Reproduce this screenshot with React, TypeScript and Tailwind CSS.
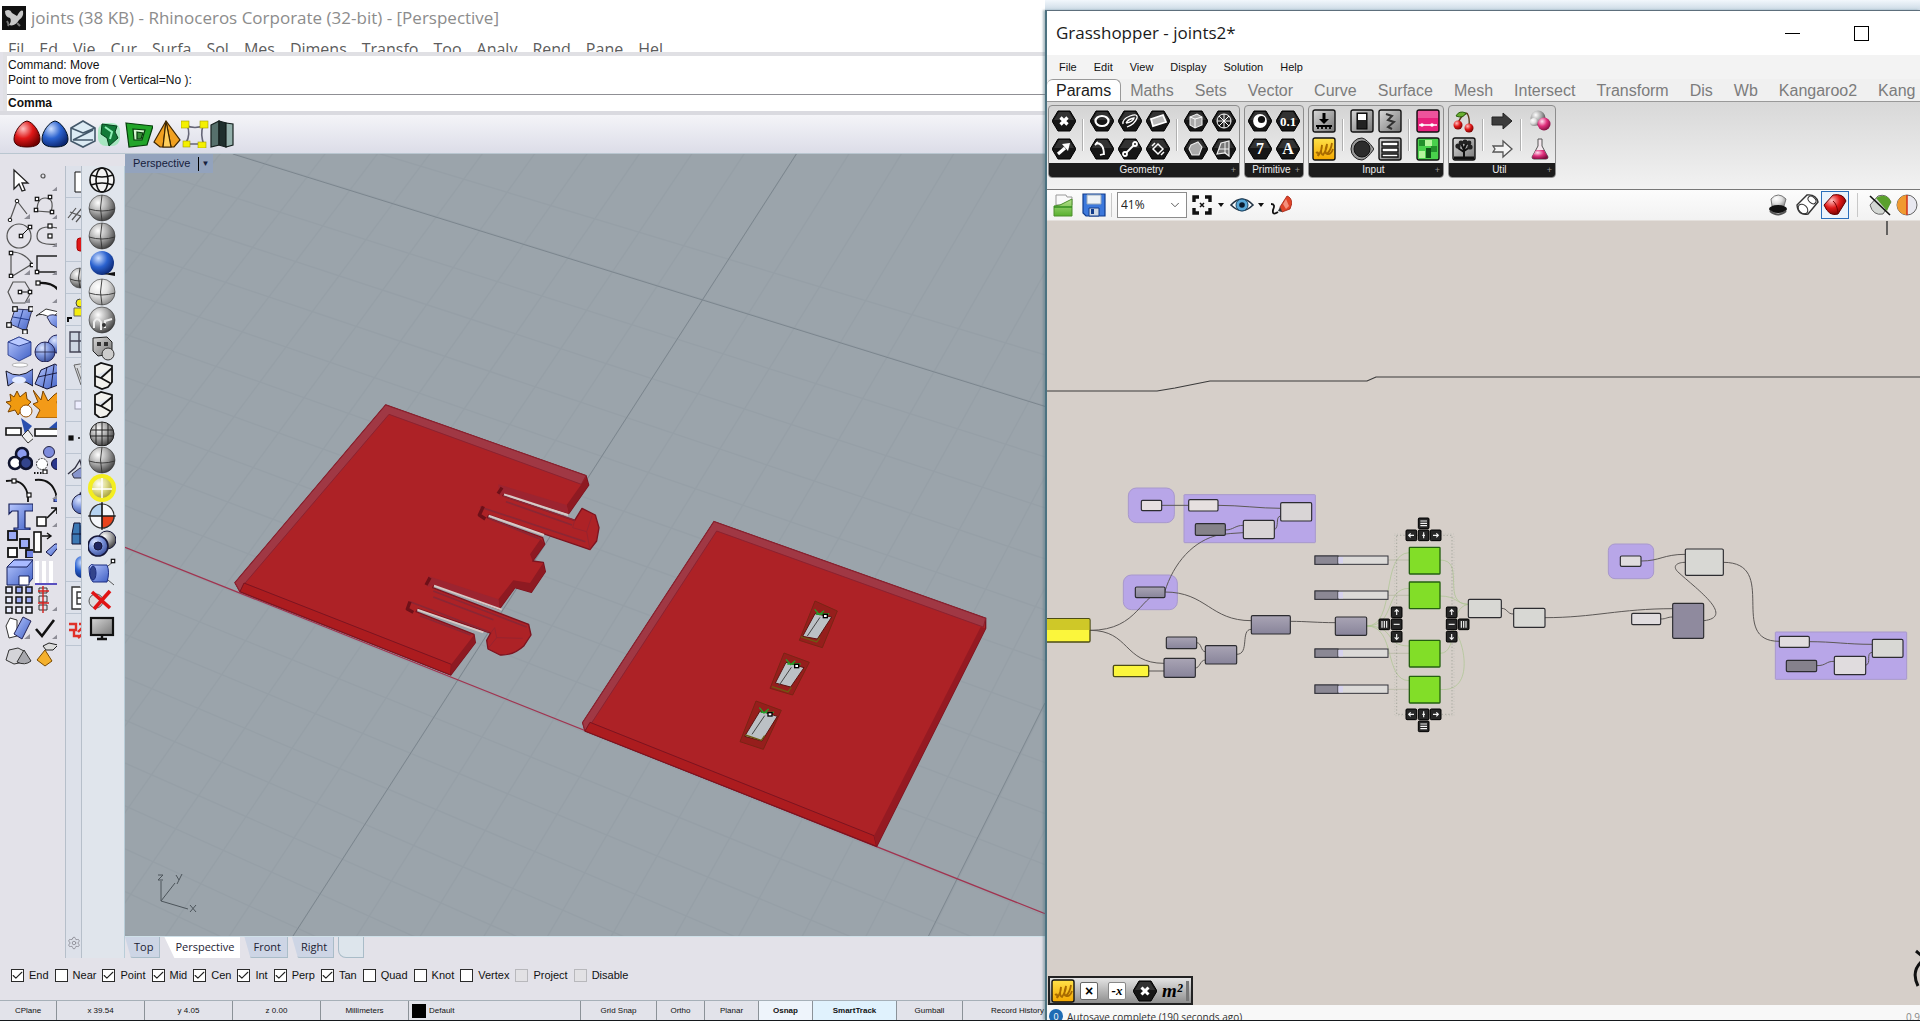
import type { ReactNode } from "react";
import { Check, ChevronDown, Settings } from "lucide-react";

interface IconDef {
  label: string;
  art: ReactNode;
}

/** Shared gradients, referenced by id from every icon. */
function Gradients() {
  const balls: [string, string, string, string][] = [
    ["gray", "#ffffff", "#a8a8a8", "#3c3c3c"],
    ["pale", "#ffffff", "#e0e0e0", "#8a8a8a"],
    ["blue", "#cfe0ff", "#2b62cf", "#0b2670"],
    ["soft", "#dde6ff", "#7d95dc", "#3a4f9a"],
    ["red", "#ffc0c0", "#e01818", "#700000"],
    ["green", "#e2ffd0", "#34b034", "#0a4f14"],
    ["yellow", "#ffffff", "#dedc8c", "#a8a23c"],
    ["pink", "#ffe0f0", "#e0307c", "#7a0c3c"],
  ];
  return (
    <svg className="absolute h-0 w-0" aria-hidden>
      <defs>
        {balls.map(([id, a, b, c]) => (
          <radialGradient key={id} id={id} cx="0.35" cy="0.3" r="0.75">
            <stop offset="0" stopColor={a} />
            <stop offset="0.5" stopColor={b} />
            <stop offset="1" stopColor={c} />
          </radialGradient>
        ))}
        <linearGradient id="steel" x1="0" y1="0" x2="1" y2="1">
          <stop offset="0" stopColor="#d8d8d8" />
          <stop offset="1" stopColor="#777777" />
        </linearGradient>
        <linearGradient id="blueFace" x1="0" y1="0" x2="1" y2="1">
          <stop offset="0" stopColor="#b8c8ff" />
          <stop offset="1" stopColor="#3f5fc4" />
        </linearGradient>
        <linearGradient id="leaf" x1="0" y1="0" x2="0" y2="1">
          <stop offset="0" stopColor="#b6e08c" />
          <stop offset="1" stopColor="#57b02e" />
        </linearGradient>
        <linearGradient id="gold" x1="0" y1="0" x2="0" y2="1">
          <stop offset="0" stopColor="#ffe24a" />
          <stop offset="1" stopColor="#f5a800" />
        </linearGradient>
        <linearGradient id="plum" x1="0" y1="0" x2="0" y2="1">
          <stop offset="0" stopColor="#a9a4b4" />
          <stop offset="1" stopColor="#88849a" />
        </linearGradient>
      </defs>
    </svg>
  );
}

function ToolButton({ label, art, className = "w-7" }: IconDef & { className?: string }) {
  return (
    <button type="button" aria-label={label} title={label} className={`block h-7 overflow-hidden ${className}`}>
      <svg viewBox="0 0 28 28" className="h-7 w-7">
        {art}
      </svg>
    </button>
  );
}

function Ball({ fill, r = 13, lines = true }: { fill: string; r?: number; lines?: boolean }) {
  return (
    <g>
      <circle cx="14" cy="14" r={r} fill={`url(#${fill})`} stroke="#333" strokeWidth="0.6" />
      {lines ? (
        <g fill="none" stroke="#333" strokeWidth="0.9">
          <path d={`M${14 - r} 15 Q14 19 ${14 + r} 15`} />
          <path d={`M14 ${14 - r} Q11 14 14 ${14 + r}`} />
        </g>
      ) : null}
    </g>
  );
}

function Handles({ points, size = 3.4, fill = "#fff" }: { points: number[][]; size?: number; fill?: string }) {
  return (
    <g fill={fill} stroke="#111" strokeWidth="1.2">
      {points.map(([x, y]) => (
        <rect key={`${x}-${y}`} x={x - size / 2} y={y - size / 2} width={size} height={size} />
      ))}
    </g>
  );
}

const corner = <path d="M25 20 v5 h-6 z" fill="#8d8d96" />;
const thin = { fill: "none", stroke: "#555", strokeWidth: 1.2 };

const eggPath = "M14 1 C20 2 27 12 27 19 C27 25 22 27 14 27 C6 27 1 25 1 19 C1 12 8 2 14 1 Z";

const toolbarIcons: IconDef[] = [
  { label: "Red egg", art: <path d={eggPath} fill="url(#red)" stroke="#400" /> },
  { label: "Blue egg", art: <path d={eggPath} fill="url(#blue)" stroke="#012" /> },
  {
    label: "Wire hexagon",
    art: (
      <g fill="#dcebf4" stroke="#44586a" strokeWidth="1.6">
        <path d="M14 1 L26 8 V21 L14 27 L2 21 V8 Z" />
        <path d="M2 8 L14 13 L26 8 M4 20 L24 10 M4 20 H24" fill="none" />
      </g>
    ),
  },
  {
    label: "Green mesh",
    art: (
      <g>
        <rect x="1" y="3" width="22" height="23" rx="8" fill="#7fe8a4" opacity="0.6" />
        <path d="M5 4 L20 6 L18 12 L21 18 L12 26 L10 18 L4 14 Z" fill="#127a38" stroke="#05401a" />
        <path d="M8 7 L15 12 L13 19" fill="none" stroke="#8df0b4" strokeWidth="2" />
      </g>
    ),
  },
  {
    label: "Green box",
    art: (
      <g stroke="#053d0a" strokeWidth="1.2">
        <path d="M1 3 L28 6 L22 25 L4 27 Z" fill="#22a52a" />
        <path d="M8 9 L20 10 L17 20 L9 20 Z" fill="#d9f7d3" />
        <path d="M12 12 L18 13 L16 19 L12 19 Z" fill="#3a8f3a" />
      </g>
    ),
  },
  {
    label: "Orange cone",
    art: (
      <g stroke="#3c2500" strokeWidth="1.2">
        <path d="M13 1 L1 22 L7 27 H21 L27 20 Z" fill="#f0a020" />
        <path d="M13 1 L10 27 M13 1 L18 27" fill="none" />
        <path d="M13 1 L18 27 L10 27 Z" fill="#ffcf5c" />
      </g>
    ),
  },
  {
    label: "Edit points",
    art: (
      <g>
        <path d="M4 5 Q14 10 24 5 M22 6 Q19 14 23 25 M6 5 Q10 14 5 23 M5 24 H22" fill="none" stroke="#667" strokeWidth="1.6" />
        <g fill="#f4f000" stroke="#a09c00" strokeWidth="0.6">
          <rect x="0" y="1" width="8" height="7" />
          <rect x="19" y="1" width="8" height="7" />
          <rect x="2" y="21" width="7" height="6" />
          <rect x="17" y="22" width="8" height="6" />
        </g>
      </g>
    ),
  },
  {
    label: "Slab",
    art: (
      <g stroke="#16211f" strokeWidth="1.2">
        <path d="M2 5 L10 1 V25 L2 27 Z" fill="#56706c" />
        <path d="M10 1 L17 3 V27 L10 25 Z" fill="#1f2f2d" />
        <path d="M17 3 L24 4 V25 L17 27 Z" fill="#93b0ab" />
      </g>
    ),
  },
];

const leftTools: IconDef[] = [
  { label: "Select", art: <path d="M9 4 V23 L14 18 L17 25 L20 24 L17 17 H23 Z" fill="#fff" stroke="#222" strokeWidth="1.3" /> },
  { label: "Point", art: <g><circle cx="10" cy="10" r="2" {...thin} />{corner}</g> },
  { label: "Polyline", art: <g><path d="M5 26 L12 7 L22 20" {...thin} /><circle cx="5" cy="26" r="1.8" fill="#fff" stroke="#111" /><circle cx="12" cy="7" r="1.8" fill="#fff" stroke="#111" />{corner}</g> },
  { label: "Curve", art: <g><path d="M4 17 Q4 4 12 4 Q22 4 18 18 L3 17" {...thin} /><Handles points={[[4, 5], [17, 3], [3, 16], [19, 18]]} />{corner}</g> },
  { label: "Circle", art: <g><circle cx="14" cy="14" r="12" {...thin} /><path d="M16 14 L25 5" stroke="#111" /><Handles points={[[16, 14], [25, 5]]} /></g> },
  { label: "Ellipse", art: <g><path d="M25 6 Q4 2 4 14 Q4 24 25 22" {...thin} /><Handles points={[[17, 4], [17, 14]]} size={4} />{corner}</g> },
  { label: "Arc", art: <g><path d="M6 3 V27 L27 14 Q20 2 6 2" {...thin} /><Handles points={[[6, 3], [6, 26], [27, 15]]} />{corner}</g> },
  { label: "Rectangle", art: <g><path d="M4 22 V6 H27 M4 22 H27" fill="none" stroke="#222" strokeWidth="1.4" /><Handles points={[[4, 22]]} />{corner}</g> },
  { label: "Polygon", art: <g><path d="M3 14 L8 4 H20 L26 14 L20 25 H8 Z" {...thin} /><path d="M15 14 H25" stroke="#111" /><Handles points={[[15, 14], [25, 14]]} />{corner}</g> },
  { label: "Fillet", art: <g><path d="M5 5 Q20 4 26 13" fill="none" stroke="#111" strokeWidth="2.4" /><Handles points={[[5, 5]]} size={4} />{corner}</g> },
  { label: "Surface", art: <g><path d="M10 3 L27 4 L21 25 L5 18 Z" fill="url(#blueFace)" stroke="#335" /><path d="M8 11 L25 14 M18 4 L13 21" stroke="#223a8a" /><Handles points={[[10, 3], [26, 3], [4, 19], [20, 26]]} size={4.5} /></g> },
  { label: "Bend", art: <g><path d="M3 10 L13 3 L26 6 L18 12 Q8 6 3 10 Z" fill="#fff" stroke="#333" /><path d="M14 11 Q19 6 28 12 V24 L18 18 Z" fill="url(#blueFace)" stroke="#335" /></g> },
  { label: "Box", art: <g stroke="#1c2f80" strokeWidth="0.8"><path d="M3 8 L14 3 L26 8 V21 L14 27 L3 21 Z" fill="url(#blueFace)" /><path d="M3 8 L14 12 L26 8 L14 3 Z" fill="#b9c9ff" /></g> },
  { label: "Spheres", art: <g><circle cx="24" cy="10" r="9" fill="url(#soft)" stroke="#225" /><circle cx="12" cy="18" r="10" fill="url(#soft)" stroke="#225" /><path d="M12 8 V28 M2 18 H22" stroke="#224" strokeWidth="0.8" /></g> },
  { label: "Patch", art: <g><path d="M1 9 Q14 18 28 7 V24 Q14 14 3 24 Z" fill="url(#blueFace)" stroke="#112" /><ellipse cx="14" cy="18" rx="7" ry="3.5" fill="#e4ecff" /><ellipse cx="15" cy="3" rx="8" ry="2" fill="#fff" stroke="#888" strokeWidth="0.6" /></g> },
  { label: "Mesh", art: <g><path d="M8 8 L22 2 L28 6 V22 L14 27 L2 22 Z" fill="url(#blueFace)" stroke="#113" /><path d="M5 15 L28 10 M14 5 L10 26 M21 3 L18 26" stroke="#113" strokeWidth="0.9" /></g> },
  { label: "Gear", art: <g><path d="M5 4 L9 7 L12 1 L15 7 L21 2 L22 9 L26 12 L22 16 L23 22 L17 20 L13 25 L10 20 L3 22 L6 16 L1 12 L6 11 Z" fill="#f09a10" stroke="#7a4300" /><circle cx="21" cy="21" r="6" fill="#fff" stroke="#964f00" /></g> },
  { label: "Explode", art: <path d="M0 0 L8 10 L10 1 L15 11 L21 5 L28 0 L24 12 L28 28 H3 L7 20 L0 14 L5 12 Z" fill="#f39a18" stroke="#7a4300" /> },
  { label: "Trim", art: <g><path d="M16 0 L27 8 L20 16 Z" fill="#2a4fae" /><path d="M1 10 H16 V17 H1 Z" fill="#fff" stroke="#111" strokeWidth="1.6" /><path d="M17 18 L23 12 L29 20 L23 25 Z" fill="#eee" stroke="#333" /></g> },
  { label: "Split", art: <g><path d="M16 10 L28 0 V10 Z" fill="#2a4fae" /><path d="M2 11 H28 V18 H2 Z" fill="#fff" stroke="#111" strokeWidth="1.6" /></g> },
  { label: "Union", art: <g stroke="#10142e" strokeWidth="2.6"><circle cx="17" cy="8" r="6" fill="#8c9cf0" /><circle cx="10" cy="17" r="6" fill="#fff" /><circle cx="21" cy="17" r="6" fill="#33448c" /></g> },
  { label: "Group", art: <g><circle cx="16" cy="6" r="5.5" fill="#7d8bdc" stroke="#224" /><circle cx="9" cy="18" r="5.5" fill="#fff" stroke="#333" strokeDasharray="2 1" /><circle cx="24" cy="18" r="5.5" fill="#2b378c" stroke="#113" /><path d="M1 27 H10" stroke="#111" strokeWidth="2" strokeDasharray="1.5 1.5" /><Handles points={[[12, 26]]} size={4} /></g> },
  { label: "Curve edit", art: <g><path d="M1 7 Q20 4 23 22 V28" fill="none" stroke="#111" strokeWidth="1.8" /><Handles points={[[9, 7], [24, 21]]} size={4} /></g> },
  { label: "Extend", art: <g><path d="M2 6 Q18 4 23 20 V28" fill="none" stroke="#111" strokeWidth="1.8" /><path d="M21 24 h6 v4 h-6 z" fill="#5d7be0" stroke="#114" />{corner}</g> },
  { label: "Text", art: <path d="M4 2 H28 V9 H20 V26 H25 V28 H9 V26 H13 V9 H7 L4 12 Z" fill="url(#blueFace)" stroke="#16205c" strokeWidth="1.2" /> },
  { label: "Move", art: <g><path d="M14 16 L24 6 M18 6 H24 V12" fill="none" stroke="#111" strokeWidth="1.6" /><rect x="4" y="15" width="9" height="9" fill="#fff" stroke="#111" strokeWidth="1.5" />{corner}</g> },
  { label: "Copy", art: <g stroke="#111" strokeWidth="1.8"><rect x="3" y="1" width="9" height="9" fill="#9cabf5" /><rect x="3" y="18" width="9" height="9" fill="#fff" /><rect x="15" y="9" width="9" height="9" fill="#9cabf5" /><rect x="21" y="20" width="8" height="8" fill="#6d80e0" /></g> },
  { label: "Align", art: <g><rect x="1" y="2" width="7" height="20" fill="#fff" stroke="#111" strokeWidth="1.6" /><path d="M9 6 H18 M14 3 L18 6 L14 9" fill="none" stroke="#111" strokeWidth="1.4" /><path d="M13 22 L22 14 H28 L18 26 Z" fill="url(#blueFace)" stroke="#114" /></g> },
  { label: "Solid edit", art: <g stroke="#16205c"><path d="M2 9 L9 2 H28 V20 L22 27 H2 Z" fill="url(#blueFace)" /><path d="M2 9 H22 L28 2 H9 Z" fill="#a8baff" /><path d="M14 27 V18 H24 V27 Z" fill="#fff" /></g> },
  { label: "Project", art: <g><path d="M4 3 V25 M11 3 V25 M18 3 V25" stroke="#fff" strokeWidth="4" /><path d="M2 26 H28" stroke="#5a50c0" strokeWidth="2" /></g> },
  {
    label: "Array",
    art: (
      <g stroke="#111" strokeWidth="1.5">
        {[1, 11, 21].map((x) => [1, 11, 21].map((y) => (
          <rect key={`${x}-${y}`} x={x} y={y} width="6" height="6" fill={x > 1 && y < 20 ? "#9cabf5" : "#e8ecff"} />
        )))}
      </g>
    ),
  },
  { label: "Section", art: <g><path d="M6 2 H14 V7 H6 Z M6 10 H14 V16 H6 Z M6 19 H14 V24 H6 Z" fill="none" stroke="#333" /><path d="M10 0 V27 M5 5 H16 M5 17 H16" stroke="#d4201c" strokeWidth="1.4" />{corner}</g> },
  { label: "Set points", art: <g><path d="M1 12 L5 4 L12 6 V22 L4 24 Z" fill="#fff" stroke="#333" /><path d="M9 20 L18 3 L26 7 L17 25 Z" fill="url(#blueFace)" stroke="#225" />{corner}</g> },
  { label: "Check", art: <g><path d="M3 15 L9 22 L21 6" fill="none" stroke="#111" strokeWidth="2.6" />{corner}</g> },
  { label: "Analyze", art: <g><path d="M1 18 L4 8 L13 6 L19 9 V20 L9 22 Z" fill="#d4d4d8" stroke="#333" /><path d="M12 20 L19 8 L26 19 Q20 24 12 20 Z" fill="#a8a8ae" stroke="#333" /></g> },
  { label: "Render", art: <g><path d="M4 18 L12 8 L19 19 L12 24 Z" fill="#f4b02c" stroke="#7a4a00" /><path d="M10 4 L16 1 L25 3 L20 8 L13 8 Z" fill="#ddd" stroke="#222" /></g> },
];

const displayModes: IconDef[] = [
  { label: "Wireframe", art: <g fill="none" stroke="#111" strokeWidth="1.6"><circle cx="14" cy="14" r="12" fill="#f4f4f4" /><ellipse cx="14" cy="14" rx="6" ry="12" /><path d="M3 9 Q14 13 25 9 M3 19 Q14 15 25 19" /></g> },
  { label: "Shaded", art: <Ball fill="gray" /> },
  { label: "Rendered", art: <Ball fill="gray" /> },
  { label: "Blue shaded", art: <g><circle cx="14" cy="13" r="12" fill="url(#blue)" /><path d="M16 24 L27 26 V22 Z" fill="#111" /></g> },
  { label: "Ghosted", art: <Ball fill="pale" /> },
  { label: "X-Ray", art: <g><Ball fill="gray" lines={false} /><path d="M6 22 V16 Q9 10 13 16 V24 M17 22 V15 L24 13" fill="none" stroke="#eee" strokeWidth="2" /><circle cx="16" cy="19" r="2" fill="#333" /></g> },
  { label: "Technical", art: <g><path d="M5 4 L19 3 L24 8 V20 L10 22 L5 17 Z" fill="url(#steel)" stroke="#222" /><circle cx="20" cy="20" r="6" fill="#ccc" stroke="#333" /><path d="M9 8 H13 V12 H9 Z M16 8 H20 V12 H16 Z" fill="#333" /></g> },
  { label: "Artistic", art: <path d="M7 4 L13 1 L24 4 V20 L20 25 L14 27 L7 24 Z M7 14 L13 16 L24 6 M13 16 L22 21" fill="#f2f2ee" stroke="#111" strokeWidth="1.8" /> },
  { label: "Pen", art: <path d="M7 5 L13 2 L24 5 V20 L19 26 L12 28 L7 24 Z M7 14 L13 16 L24 7 M13 16 L22 21" fill="#f2f2ee" stroke="#111" strokeWidth="1.8" /> },
  { label: "Grid sphere", art: <g><circle cx="14" cy="16" r="12" fill="url(#gray)" stroke="#222" /><path d="M3 12 H25 M2 18 H26 M8 6 V26 M14 4 V28 M20 6 V26" stroke="#222" /></g> },
  { label: "Flat sphere", art: <Ball fill="gray" /> },
  { label: "Highlight", art: <g><circle cx="14" cy="14" r="14" fill="#f4ee20" /><circle cx="14" cy="14" r="10" fill="url(#yellow)" /><path d="M4 15 H24 M14 4 V24" stroke="#fff" strokeWidth="1.5" /></g> },
  { label: "Quadrants", art: <g stroke="#333" strokeWidth="1.2"><circle cx="14" cy="14" r="12" fill="#f4f6fa" /><path d="M14 14 V2 A12 12 0 0 0 2 14 Z" fill="#b5d3f2" /><path d="M14 14 H26 A12 12 0 0 1 14 26 Z" fill="#e8431c" /><path d="M0 14 H28 M14 0 V28" stroke="#111" /></g> },
  { label: "Materials", art: <g stroke="#15173a"><circle cx="19" cy="10" r="9" fill="url(#gray)" /><circle cx="10" cy="16" r="10" fill="url(#soft)" strokeWidth="1.6" /><circle cx="10" cy="16" r="4" fill="#1f2560" /></g> },
  { label: "Clip box", art: <g stroke="#1b2c80"><path d="M1 9 Q3 5 6 7 H19 Q22 14 19 24 H5 Q1 20 1 9 Z" fill="url(#blueFace)" /><ellipse cx="5" cy="15" rx="3" ry="7" fill="#33448c" /><path d="M20 8 L26 3 M20 22 L26 27" fill="none" stroke="#555" /><Handles points={[[25, 3]]} /></g> },
  { label: "Remove", art: <g><circle cx="8" cy="15" r="7" fill="#ddd" stroke="#555" /><path d="M4 6 L22 22 M22 5 L6 23" stroke="#e01414" strokeWidth="3.6" /></g> },
  { label: "Monitor", art: <g><rect x="3" y="4" width="22" height="17" fill="url(#steel)" stroke="#111" strokeWidth="2.2" /><path d="M9 25 H19 M14 21 V25" stroke="#111" strokeWidth="2.4" /></g> },
];

const sideTabs: IconDef[] = [
  { label: "Page", art: <path d="M9 4 H28 V24 H9 Z" fill="#fff" stroke="#111" /> },
  { label: "Hatch", art: <path d="M2 18 L10 8 M6 20 L16 8 M10 22 L20 10 M4 12 L20 18" {...thin} /> },
  { label: "Marker", art: <rect x="11" y="6" width="12" height="13" rx="3" fill="#e01818" stroke="#a00" /> },
  { label: "Globe", art: <Ball fill="gray" r={10} /> },
  { label: "Lamp", art: <g><circle cx="14" cy="7" r="4" fill="#f4ec10" stroke="#444" /><path d="M8 12 H18 V20 H8 Z" fill="#f4ec10" stroke="#666" /><path d="M2 26 V22 H6" fill="none" stroke="#111" strokeWidth="2" /></g> },
  { label: "Table", art: <path d="M4 4 H28 V24 H4 Z M4 13 H28 M13 4 V24" fill="#cdd6e2" stroke="#445" strokeWidth="1.4" /> },
  { label: "Claw", art: <path d="M8 5 L20 3 V25 L15 25 Z M11 8 L16 22 M15 6 L18 20" fill="#d8dade" stroke="#666" /> },
  { label: "Dashes", art: <rect x="9" y="9" width="12" height="8" fill="#eef" stroke="#99a" /> },
  { label: "Spacing", art: <g><Handles points={[[5, 14]]} size={4} fill="#111" /><path d="M12 14 H24" stroke="#111" strokeWidth="1.6" strokeDasharray="2 3" /></g> },
  { label: "Vehicle", art: <g><path d="M2 18 L9 12 L14 4 L16 12 L20 14" fill="none" stroke="#334" strokeWidth="1.4" /><path d="M6 18 L14 12 H28 V22 H8 Z" fill="#8795cc" stroke="#334" /></g> },
  { label: "Blue ball", art: <g><circle cx="16" cy="16" r="10" fill="url(#soft)" stroke="#224" /><path d="M14 6 L18 2" stroke="#113" strokeWidth="2" /></g> },
  { label: "Blocks", art: <path d="M8 3 H28 V24 H6 V14 Z M6 14 H28 M14 3 V24" fill="#3c78b4" stroke="#113" /> },
  { label: "Blob", art: <rect x="9" y="4" width="18" height="22" rx="7" fill="url(#blue)" /> },
  { label: "Sheet", art: <path d="M6 3 H28 V25 H6 Z M11 8 H28 V20 H11 Z M18 8 V20 M11 14 H28" fill="#fff" stroke="#333" strokeWidth="1.4" /> },
  { label: "Arrows", art: <path d="M3 8 H10 V14 H3 M8 14 V20 H14 M12 16 L19 9 M13 8 H19 M12 22 L20 15" fill="none" stroke="#e03028" strokeWidth="2.4" /> },
];

const rhinoMenus = ["Fil", "Ed", "Vie", "Cur", "Surfa", "Sol", "Mes", "Dimens", "Transfo", "Too", "Analy", "Rend", "Pane", "Hel"];

interface Snap {
  name: string;
  on?: boolean;
  disabled?: boolean;
}

const snaps: Snap[] = [
  { name: "End", on: true },
  { name: "Near" },
  { name: "Point", on: true },
  { name: "Mid", on: true },
  { name: "Cen", on: true },
  { name: "Int", on: true },
  { name: "Perp", on: true },
  { name: "Tan", on: true },
  { name: "Quad" },
  { name: "Knot" },
  { name: "Vertex" },
  { name: "Project", disabled: true },
  { name: "Disable", disabled: true },
];

function SnapOption({ name, on = false, disabled = false }: Snap) {
  return (
    <label className="flex items-center gap-[5px]">
      <span className="relative block size-[13px]">
        <input
          type="checkbox"
          defaultChecked={on}
          disabled={disabled}
          className="peer block size-[13px] appearance-none border border-[#2a2a2a] bg-white disabled:border-[#b8b8bc] disabled:bg-[#e2e1e4]"
        />
        <Check className="pointer-events-none absolute inset-0 hidden size-[13px] text-[#222] peer-checked:block" strokeWidth={2} />
      </span>
      {name}
    </label>
  );
}

// Grid lines run to two vanishing points.
const vpX = [-3879, -1141];
const vpY = [2560, -2841];
const gridX = Array.from({ length: 30 }, (_, i) => 62 + i * 35);
const gridY = Array.from({ length: 32 }, (_, i) => -490 + i * 52);

function farPoint(from: number[], to: number[], t: number) {
  return [from[0] + (to[0] - from[0]) * t, from[1] + (to[1] - from[1]) * t];
}

function Grid() {
  return (
    <svg x="125" y="153" width="920" height="783" viewBox="102 125 751 639" preserveAspectRatio="none">
      <g stroke="#8c969e" strokeWidth="1" opacity="0.3">
        {gridX.map((y) => {
          const end = farPoint([102, y], vpX, -0.3);
          return <line key={y} x1="102" y1={y} x2={end[0]} y2={end[1]} />;
        })}
        {gridY.map((x) => {
          const end = farPoint([x, 765], vpY, 0.3);
          return <line key={x} x1={x} y1="765" x2={end[0]} y2={end[1]} />;
        })}
      </g>
      <g stroke="#7b858d" strokeWidth="0.8">
        <line x1="190" y1="125" x2="853" y2="331" />
        <line x1="238" y1="765" x2="650" y2="125" />
        <line x1="757" y1="765" x2="853" y2="573" />
      </g>
      <line x1="102" y1="446" x2="853" y2="745" stroke="#a03450" strokeWidth="1" />
    </svg>
  );
}

function TonguePlate() {
  return (
    <svg x="220" y="380" width="400" height="310" viewBox="0 0 1200 930" className="overflow-visible">
      <g strokeLinejoin="round">
        <path
          d="M497 72 L1098 284 L1106 312 L1046 398 L852 338 L848 344 L1064 418 L1086 382 L1126 402 L1137 440 L1130 480 L1110 506 L806 402 L802 410 L968 470 L974 490 L938 540 L970 544 L976 572 L934 634 L885 620 L838 684 L642 612 L638 620 L926 730 L933 762 L912 794 Q880 824 840 822 L804 804 L800 778 L812 756 L594 684 L588 692 L762 760 L766 785 L692 882 L60 632 L45 605 Z"
          fill="#ad2226"
          stroke="#7c1420"
          strokeWidth="4"
        />
        <path d="M497 72 L1098 284 L1084 310 L507 100 L72 610 L60 632 L45 605 Z" fill="#a03844" stroke="#8b2230" strokeWidth="3" />
        <path d="M60 632 L72 606 L694 850 L692 882 Z" fill="#ac1c1f" stroke="#7c1420" strokeWidth="3" />
        <path d="M694 850 L762 762 L766 785 L692 882 Z M1040 372 L1098 290 L1106 312 L1046 398 Z M835 655 L880 598 L930 606 L968 548 L976 572 L934 634 L885 620 L838 684 Z M930 520 L962 474 L974 490 L938 540 Z" fill="#8e1a22" />
        <path d="M835 310 L1040 372 L1046 398 L852 338 L838 345 Z M625 585 L835 655 L838 684 L642 612 L622 618 Z" fill="#9c2430" />
        <path d="M850 345 L1064 418 M858 362 L1056 432 M780 378 L1096 482 M640 630 L920 738 M640 648 L820 716 M570 662 L806 752 M806 412 L960 474 M600 704 L752 762" fill="none" stroke="#8b2634" strokeWidth="5" />
        <path d="M1064 418 L1058 440 L1100 452 L1116 404 M1100 452 L1110 506 M812 756 L824 740 L830 770 L908 772 M830 770 L806 800" fill="none" stroke="#98222e" strokeWidth="3" />
        <path d="M846 320 L834 338 M790 376 L778 402 L796 414 M630 590 L618 612 M570 662 L562 684 L580 694" fill="none" stroke="#6e1018" strokeWidth="10" />
        <path d="M852 340 L1044 402 M806 404 L972 462 M642 614 L845 686 M592 686 L790 754" fill="none" stroke="#d9c9c6" strokeWidth="6" />
      </g>
    </svg>
  );
}

const slots = [
  { edge: "735,300 802,330 757,440 688,418", open: "735,338 785,348 742,414 698,406", dot: [766, 345] },
  { edge: "642,456 718,484 668,582 600,562", open: "648,484 702,500 662,558 616,546", dot: [680, 495] },
  { edge: "558,600 634,628 580,745 510,722", open: "570,630 622,646 576,720 524,706", dot: [600, 640] },
];

function SlotPlate() {
  return (
    <svg x="570" y="500" width="430" height="360" viewBox="0 0 1290 1080" className="overflow-visible">
      <path d="M432 62 L1247 352 L1247 382 L920 1036 L45 690 L38 665 Z" fill="#ad2226" stroke="#7c1420" strokeWidth="4" />
      <path d="M432 62 L1247 352 L1240 378 L440 90 L66 664 L45 690 L38 665 Z" fill="#a03844" stroke="#8b2230" strokeWidth="3" />
      <path d="M45 690 L60 664 L912 1004 L920 1036 Z" fill="#ac1c1f" stroke="#7c1420" strokeWidth="3" />
      <path d="M912 1004 L1232 378 L1247 382 L920 1036 Z" fill="#951a22" />
      {slots.map(({ edge, open, dot }) => (
        <g key={edge}>
          <polygon points={edge} fill="#961e1c" stroke="#7a2414" strokeWidth="3" />
          <polygon points={open} fill="#bcc1c5" stroke="#5a1410" strokeWidth="3" />
          <path d={`M${dot[0] - 74} ${dot[1] + 62} l48 16 l10 -14`} fill="none" stroke="#6d5a12" strokeWidth="4" />
          <path d={`M${dot[0] - 32} ${dot[1] - 20} l14 16 l14 -12 M${dot[0] - 28} ${dot[1] - 6} h40`} fill="none" stroke="#22a02a" strokeWidth="4" />
          <path d={`M${dot[0] - 16} ${dot[1] + 4} l-38 56`} stroke="#444" strokeWidth="3" />
          <rect x={dot[0] - 6} y={dot[1] - 5} width="12" height="10" fill="#fff" stroke="#000" strokeWidth="4" />
        </g>
      ))}
    </svg>
  );
}

function Viewport() {
  return (
    <section aria-label="Perspective viewport" className="relative min-h-0 flex-1 overflow-hidden bg-[#9ba4ab]">
      <svg viewBox="125 153 920 783" preserveAspectRatio="xMinYMin slice" className="absolute inset-0 h-full w-full">
        <Grid />
        <TonguePlate />
        <SlotPlate />
        <g fill="none" stroke="#4c545a" strokeWidth="1">
          <path d="M161 900 V880 M161 900 L175 882 M161 900 L188 908" />
          <path d="M158 874 h5 l-5 5 h5 M176 874 l3 5 M182 873 l-5 10 M190 904 l6 7 M196 904 l-6 7" />
        </g>
      </svg>
      <button type="button" className="relative flex h-[19px] items-center bg-[#93a3bd] pl-2 text-[11px] text-[#16203c]">
        <span className="pr-2">Perspective</span>
        <span className="flex h-[14px] items-center border-l border-black pr-1 pl-[2px] text-[8px] leading-none">▼</span>
      </button>
    </section>
  );
}

const viewTabs = ["Top", "Perspective", "Front", "Right"];

function ViewTabs() {
  return (
    <nav aria-label="Viewports" className="flex h-[22px] items-start gap-1 border-t border-[#cfe0e8] font-['Open_Sans',sans-serif] text-[11px]">
      {viewTabs.map((tab) => (
        <button
          key={tab}
          type="button"
          className={`h-[21px] pr-[6px] text-[#1c2233] ${
            tab === "Perspective"
              ? "bg-white pl-[11px] [clip-path:polygon(0_0,100%_0,100%_100%,10px_100%)]"
              : "rounded-bl-lg border-r border-b border-[#a9bcc8] bg-[#cdd5e5] pl-[9px] [clip-path:polygon(0_0,100%_0,100%_100%,6px_100%)]"
          }`}
        >
          {tab}
        </button>
      ))}
      <button type="button" aria-label="New tab" className="h-[21px] w-[26px] rounded-bl-lg border-r border-b border-l border-[#a9bcc8] bg-[#dde5ec]" />
    </nav>
  );
}

function Cell({ children, className = "" }: { children: ReactNode; className?: string }) {
  return <div className={`flex shrink-0 items-center justify-center border-r border-[#8b9298] ${className}`}>{children}</div>;
}

function RhinoWindow() {
  return (
    <main className="flex min-w-0 flex-col overflow-hidden bg-[#e3e2e9] text-[#111]">
      <header className="bg-white font-['Open_Sans',sans-serif]">
        <div className="flex h-9 items-center gap-[5px] pl-[2px]">
          <svg viewBox="0 0 24 24" className="size-6" aria-hidden>
            <rect width="24" height="24" fill="#111" />
            <path d="M3 5 Q8 2 10 7 L15 10 Q19 3 21 5 Q22 11 17 14 Q13 21 7 19 Q10 15 8 12 Q3 11 3 5 Z" fill="#c8c8c8" />
            <path d="M5 15 Q7 18 6 20 M15 17 L18 20" stroke="#777" strokeWidth="2" />
          </svg>
          <h1 className="truncate text-[17px] text-[#8c8c8c]">joints (38 KB) - Rhinoceros Corporate (32-bit) - [Perspective]</h1>
        </div>
        <nav aria-label="Rhino menu" className="flex h-4 gap-[15px] overflow-hidden pt-[5px] pl-2 text-[16px] leading-[16px] text-[#5c5c5c]">
          {rhinoMenus.map((item) => (
            <button key={item} type="button" className="h-4">
              {item}
            </button>
          ))}
        </nav>
      </header>

      <section className="ml-[3px] border-t-4 border-l-4 border-[#e0e0e4] bg-white text-[12px]">
        <div className="h-[38px] pt-[2px] pl-px leading-[15px]">
          <p>Command: Move</p>
          <p>Point to move from ( Vertical=No ):</p>
        </div>
        <input aria-label="Command" defaultValue="Comma" className="block h-[17px] w-full border-t border-[#8f8f94] bg-white pl-px font-bold outline-none" />
      </section>

      <div className="flex h-[42px] items-center border-t-4 border-[#dadae0] bg-linear-to-b from-[#f4f4f8] to-[#dcdde8] pl-[13px]">
        {toolbarIcons.map((icon) => (
          <ToolButton key={icon.label} {...icon} />
        ))}
      </div>

      <div className="flex min-h-0 flex-1 border-t border-[#b9c6d0]">
        <aside className="flex w-[125px] shrink-0 pt-3">
          <div className="grid h-fit grid-cols-[28px_24px] pl-[5px]">
            {leftTools.map((icon, i) => (
              <ToolButton key={icon.label} {...icon} className={i % 2 ? "w-6" : "w-7"} />
            ))}
          </div>
          <div className="ml-2 flex w-[17px] flex-col justify-between border-x border-[#b6bfca] bg-[#dde1ea]">
            <div>
              {sideTabs.map((icon) => (
                <div key={icon.label} className="flex h-8 items-center overflow-hidden rounded-tr-lg border-b border-[#bcc5d2]">
                  <ToolButton {...icon} className="w-[15px]" />
                </div>
              ))}
            </div>
            <button type="button" aria-label="Toolbar options" className="mb-2 self-center">
              <Settings className="size-[14px] text-[#8d8d96]" strokeWidth={1.5} />
            </button>
          </div>
          <div className="flex-1 border-r border-[#b9cdd8] bg-[#e0e5ec] pl-[6px]">
            {displayModes.map((icon) => (
              <ToolButton key={icon.label} {...icon} />
            ))}
          </div>
        </aside>
        <div className="flex min-w-0 flex-1 flex-col">
          <Viewport />
          <ViewTabs />
        </div>
      </div>

      <div className="flex h-[42px] shrink-0 items-center gap-[6px] pb-2 pl-[11px] text-[11px]">
        {snaps.map((snap) => (
          <SnapOption key={snap.name} {...snap} />
        ))}
      </div>

      <footer className="flex h-5 shrink-0 overflow-hidden border-t border-[#a6b0b8] bg-[#e2e3ea] text-[8px] whitespace-nowrap">
        <Cell className="w-[57px]">CPlane</Cell>
        <Cell className="w-[88px]">x 39.54</Cell>
        <Cell className="w-[88px]">y 4.05</Cell>
        <Cell className="w-[88px]">z 0.00</Cell>
        <Cell className="w-[88px]">Millimeters</Cell>
        <div className="flex w-[172px] shrink-0 items-center gap-[3px] border-r border-[#8b9298] pl-[3px]">
          <span className="size-[14px] bg-black" />
          Default
        </div>
        <Cell className="w-[76px]">Grid Snap</Cell>
        <Cell className="w-12">Ortho</Cell>
        <Cell className="w-[54px]">Planar</Cell>
        <Cell className="w-[54px] bg-[#eef4fb] font-bold">Osnap</Cell>
        <Cell className="w-[84px] bg-[#e0f2fd] font-bold">SmartTrack</Cell>
        <Cell className="w-[66px]">Gumball</Cell>
        <div className="flex min-w-0 flex-1 items-center pl-[28px]">Record History</div>
      </footer>
    </main>
  );
}

/* ---------- Grasshopper ---------- */

function Hex({ children }: { children: ReactNode }) {
  return (
    <svg viewBox="0 0 24 24" className="size-6">
      <path d="M0 12 L6 2 H18 L24 12 L18 22 H6 Z" fill="#161616" stroke="#000" strokeLinejoin="round" />
      <path d="M7 3 H17 L22 11 H2 Z" fill="#fff" opacity="0.12" />
      <g fill="none" stroke="#fff" strokeWidth="1.8">
        {children}
      </g>
    </svg>
  );
}

function HexText({ text, size = 14 }: { text: string; size?: number }) {
  return (
    <Hex>
      <text x="12" y="17" textAnchor="middle" fontSize={size} fill="#fff" stroke="none" className="font-['Liberation_Serif',serif] font-bold">
        {text}
      </text>
    </Hex>
  );
}

function Tile({ children, fill = "url(#steel)" }: { children: ReactNode; fill?: string }) {
  return (
    <svg viewBox="0 0 24 24" className="size-6">
      <rect x="1" y="1" width="22" height="22" rx="2" fill={fill} stroke="#111" strokeWidth="1.4" />
      {children}
    </svg>
  );
}

function Plain({ children }: { children: ReactNode }) {
  return (
    <svg viewBox="0 0 24 24" className="size-6">
      {children}
    </svg>
  );
}

const scribble = <path d="M4 16 Q7 14 6 19 Q10 14 10 8 Q8 17 11 18 Q15 12 15 7 Q12 16 15 17 Q19 13 20 6 M15 17 Q19 18 21 12" fill="none" stroke="#a86a00" strokeWidth="1.8" />;

// Each panel is a list of groups; a group is a list of [top, bottom] columns.
interface RibbonPanel {
  title: string;
  groups: IconDef[][][];
}

const ribbon: RibbonPanel[] = [
  {
    title: "Geometry",
    groups: [
      [[
        { label: "Point", art: <Hex><path d="M8.5 8.5 L15.5 15.5 M15.5 8.5 L8.5 15.5" strokeWidth="3.2" /></Hex> },
        { label: "Vector", art: <Hex><path d="M6 17 L13 11" strokeWidth="3.2" /><path d="M10 7 L18 6 L16 14 Z" fill="#fff" stroke="none" /></Hex> },
      ]],
      [
        [
          { label: "Circle", art: <Hex><ellipse cx="12" cy="12" rx="6.5" ry="5" strokeWidth="2.2" /></Hex> },
          { label: "Arc", art: <Hex><path d="M6 6 Q14 6 14 18 M10 18 L14 17 M5 8 L8 5" /></Hex> },
        ],
        [
          { label: "Curve", art: <Hex><path d="M5 15 Q4 10 12 7 Q20 4 19 9 Q17 15 9 18 M8 14 Q10 10 16 9 Q15 13 8 14" strokeWidth="1.3" /></Hex> },
          { label: "Line", art: <Hex><path d="M8 16 L16 8" /><circle cx="7" cy="17" r="2" /><circle cx="17" cy="7" r="2" /></Hex> },
        ],
        [
          { label: "Plane", art: <Hex><path d="M5 10 L17 6 L20 13 L7 17 Z" fill="#bbb" /></Hex> },
          { label: "Rectangle", art: <Hex><path d="M7 12 L12 7 L17 12 L12 17 Z M6 9 L9 6 M15 18 L18 15" strokeWidth="1.5" /></Hex> },
        ],
      ],
      [
        [
          { label: "Box", art: <Hex><path d="M6 8 L13 5 L18 8 V16 L11 19 L6 16 Z" fill="#aaa" stroke="#eee" strokeWidth="1.1" /><path d="M6 8 L11 10 L18 8 M11 10 V19" strokeWidth="1" /></Hex> },
          { label: "Brep", art: <Hex><path d="M7 8 L14 5 L18 10 L15 18 L8 18 L5 12 Z" fill="#aaa" stroke="#eee" strokeWidth="1.1" /></Hex> },
        ],
        [
          { label: "Mesh", art: <Hex><circle cx="12" cy="12" r="7" strokeWidth="1" /><path d="M5 12 H19 M12 5 V19 M7 7 L17 17 M17 7 L7 17" strokeWidth="1" /></Hex> },
          { label: "Surface", art: <Hex><path d="M9 6 L17 4 V19 L13 16 L5 17 Z" fill="#777" stroke="#eee" strokeWidth="1.2" /><path d="M13 5 V16 M7 12 H17" strokeWidth="0.9" /></Hex> },
        ],
      ],
    ],
  },
  {
    title: "Primitive",
    groups: [
      [
        [
          { label: "Boolean", art: <Hex><circle cx="12" cy="12" r="6" fill="#fff" /><circle cx="13.5" cy="10.5" r="3.6" fill="#111" stroke="none" /></Hex> },
          { label: "Integer", art: <HexText text="7" size={16} /> },
        ],
        [
          { label: "Number", art: <HexText text="0.1" size={13} /> },
          { label: "Text", art: <HexText text="A" size={16} /> },
        ],
      ],
    ],
  },
  {
    title: "Input",
    groups: [
      [[
        { label: "Import", art: <Tile><path d="M12 4 V11" stroke="#000" strokeWidth="3" /><path d="M7 10 H17 L12 15 Z" /><path d="M4 17 H20 M6 20 V17 M10 20 V17 M14 20 V17 M18 20 V17" stroke="#000" strokeWidth="1.8" /></Tile> },
        { label: "Graph", art: <Tile fill="url(#gold)">{scribble}</Tile> },
      ]],
      [
        [
          { label: "Toggle", art: <Tile><rect x="7" y="4" width="10" height="16" fill="#222" stroke="#000" /><rect x="8" y="5" width="8" height="6" fill="#fff" /></Tile> },
          { label: "Knob", art: <Plain><path d="M12 1 A11 11 0 1 0 12 23 Q17 22 24 12 Q17 2 12 1 Z" fill="#999" stroke="#222" /><circle cx="12" cy="12" r="8" fill="#2c2c2c" stroke="#111" /></Plain> },
        ],
        [
          { label: "Clipboard", art: <Tile><path d="M8 5 L14 7 L10 11 L16 13 L10 18 L14 20" fill="none" stroke="#333" strokeWidth="2" /></Tile> },
          { label: "Value list", art: <Tile><path d="M4 5 H20 V9 H4 Z M4 11 H20 V15 H4 Z M4 17 H20 V20 H4 Z" fill="#fff" stroke="#111" strokeWidth="1.4" /></Tile> },
        ],
      ],
      [[
        { label: "Gradient", art: <Tile fill="#e8207c"><path d="M2 2 H22 V9 H2 Z" fill="#f06aaa" opacity="0.7" /><path d="M3 16 H21" stroke="#fff" strokeWidth="1.6" /><circle cx="6" cy="16" r="1.8" fill="#fff" /><circle cx="16" cy="16" r="1.8" fill="#fff" /></Tile> },
        { label: "Image", art: <Tile fill="#49d04c"><path d="M3 3 H9 V9 H3 Z M15 9 H21 V15 H15 Z" fill="#23902c" /><path d="M9 3 H16 V9 H9 Z M3 14 H9 V21 H3 Z" fill="#b4f49c" /><path d="M10 11 H15 V21 H10 Z" fill="#0d5516" /></Tile> },
      ]],
    ],
  },
  {
    title: "Util",
    groups: [
      [[
        { label: "Cherry picker", art: <Plain><path d="M6 15 Q8 7 15 4 M17 17 Q18 9 15 4" fill="none" stroke="#5a3a1c" strokeWidth="1.4" /><path d="M4 7 Q7 1 14 4 Q11 10 4 7 Z" fill="#6ab030" stroke="#2c6010" /><circle cx="6" cy="16" r="4.5" fill="url(#red)" /><circle cx="17" cy="19" r="4.5" fill="url(#red)" /></Plain> },
        { label: "Tree", art: <Tile><path d="M12 21 V12 M12 15 L6 11 M12 14 L18 10 M12 13 L9 6 M12 12 L15 5" stroke="#111" strokeWidth="2" fill="none" /><g fill="#222"><circle cx="6" cy="9" r="2.6" /><circle cx="9" cy="6" r="2.4" /><circle cx="13" cy="5" r="2.4" /><circle cx="17" cy="6" r="2.4" /><circle cx="18" cy="10" r="2.6" /></g><path d="M2 21 H22" stroke="#111" strokeWidth="3" /></Tile> },
      ]],
      [[
        { label: "Jump", art: <Plain><path d="M2 8 H13 V4 L22 12 L13 20 V16 H2 Z" fill="#3c3c3c" stroke="#222" /></Plain> },
        { label: "Receive", art: <Plain><path d="M3 9 H13 V4 L22 12 L13 20 V15 H3 L5 12 Z" fill="#f4f4f4" stroke="#555" strokeWidth="1.3" /></Plain> },
      ]],
      [[
        { label: "Galapagos", art: <Plain><circle cx="10" cy="9" r="7.5" fill="url(#gray)" /><circle cx="6" cy="13" r="4" fill="url(#pale)" /><circle cx="16" cy="15" r="6.5" fill="url(#pink)" /></Plain> },
        { label: "Flask", art: <Plain><path d="M10 2 H14 V9 L20 20 Q20 22 18 22 H6 Q4 22 4 20 L10 9 Z" fill="#f4e8ee" stroke="#555" /><path d="M8 13 H16 L20 20 Q20 22 18 22 H6 Q4 22 4 20 Z" fill="url(#pink)" /></Plain> },
      ]],
    ],
  },
];

function Panel({ title, groups }: RibbonPanel) {
  return (
    <section aria-label={title} className="flex h-[73px] flex-col overflow-hidden rounded-[4px] border border-[#8d8d8d] bg-linear-to-b from-[#d4d4d4] to-[#f2f2f2]">
      <div className="flex flex-1 items-center px-px">
        {groups.map((columns, i) => (
          <div key={i} className="flex items-center">
            {i > 0 ? <span className="mx-[4px] h-8 w-[2px] border-l border-[#b0b0b0] bg-white" /> : null}
            {columns.map((column) => (
              <div key={column[0].label} className="flex flex-col">
                {column.map((icon) => (
                  <button key={icon.label} type="button" aria-label={icon.label} title={icon.label} className="grid size-7 place-items-center">
                    {icon.art}
                  </button>
                ))}
              </div>
            ))}
          </div>
        ))}
      </div>
      <h3 className="flex h-[14px] items-center bg-[#1c1c1c] px-[3px] text-[10px] leading-[14px] text-[#eee]">
        <span className="flex-1 text-center">{title}</span>
        <span className="text-[9px] text-[#999]">+</span>
      </h3>
    </section>
  );
}

const ghMenus = ["File", "Edit", "View", "Display", "Solution", "Help"];
const ghTabs = ["Maths", "Sets", "Vector", "Curve", "Surface", "Mesh", "Intersect", "Transform", "Dis", "Wb", "Kangaroo2", "Kang"];

function CanvasToolbar() {
  return (
    <div className="flex h-8 shrink-0 items-center border-t border-b border-t-[#777] border-b-[#e4e0dc] bg-linear-to-b from-[#fcfcfc] to-[#f2f2f2] pl-[5px]">
      <button type="button" aria-label="Open file">
        <svg viewBox="0 0 24 24" className="size-6">
          <path d="M4 2 H14 L15 4 H20 V12 H4 Z" fill="#fafafa" stroke="#999" />
          <path d="M2 13 L8 12 L20 6 V23 H2 Z" fill="url(#leaf)" stroke="#4c8f2c" />
          <path d="M2 14 H20" stroke="#2f8a1c" strokeWidth="1.4" />
        </svg>
      </button>
      <button type="button" aria-label="Save file" className="ml-[6px]">
        <svg viewBox="0 0 24 24" className="size-6">
          <path d="M1 1 H23 V23 H4 L1 20 Z" fill="#3c78dc" stroke="#123c8c" strokeWidth="1.2" />
          <path d="M5 2 H19 V11 H5 Z" fill="#eef2f6" stroke="#9ab" />
          <path d="M7 15 H17 V23 H7 Z" fill="#cfd8e4" stroke="#123c8c" />
          <path d="M9 16 H12 V21 H9 Z" fill="#123c8c" />
        </svg>
      </button>
      <span className="mx-[5px] h-6 w-px bg-[#c8c8c8]" />
      <label className="relative block">
        <span className="sr-only">Zoom</span>
        <select defaultValue="41%" className="block h-[26px] w-[70px] appearance-none border border-[#8c8c8c] bg-white pl-[3px] font-['Open_Sans',sans-serif] text-[12px] text-[#222]">
          <option>41%</option>
          <option>100%</option>
        </select>
        <ChevronDown className="pointer-events-none absolute top-[6px] right-[5px] size-[14px] text-[#444]" strokeWidth={1.5} />
      </label>
      <button type="button" aria-label="Zoom extents" className="ml-[3px] flex items-center gap-1">
        <svg viewBox="0 0 24 24" className="size-6">
          <path d="M4 9 V4 H9 M15 4 H20 V9 M20 15 V20 H15 M9 20 H4 V15" fill="none" stroke="#111" strokeWidth="3.4" />
          <path d="M10 10 L14 14 M14 10 L10 14" stroke="#111" strokeWidth="1.5" />
        </svg>
        <span className="border-x-[3px] border-t-[4px] border-x-transparent border-t-[#111]" />
      </button>
      <button type="button" aria-label="Preview" className="ml-[6px] flex items-center gap-1">
        <svg viewBox="0 0 24 24" className="size-6">
          <path d="M1 12 Q12 0 23 12 Q12 23 1 12 Z" fill="#f6fafc" stroke="#234" strokeWidth="1.6" />
          <circle cx="12" cy="12" r="6" fill="#58a8d8" stroke="#1c4a6c" />
          <circle cx="12" cy="12" r="2.8" fill="#0a1a2c" />
        </svg>
        <span className="border-x-[3px] border-t-[4px] border-x-transparent border-t-[#111]" />
      </button>
      <button type="button" aria-label="Sketch" className="ml-[4px]">
        <svg viewBox="0 0 24 24" className="size-6">
          <path d="M12 14 L19 3 Q23 4 24 10 L22 16 L14 19 Z" fill="#e04428" stroke="#a02010" strokeWidth="0.8" />
          <path d="M15 11 L18 6 L21 13 L18 16 Z" fill="#f4907c" />
          <path d="M10 18 L12 14 L14 19 Z" fill="#333" />
          <path d="M3 11 Q8 11 5 17 Q4 23 10 19" fill="none" stroke="#111" strokeWidth="1.8" />
        </svg>
      </button>
      <div className="ml-auto flex items-center">
        <button type="button" aria-label="No preview" className="grid h-7 w-[29px] place-items-center">
          <Plain>
            <path d="M5 6 Q12 -2 20 6 L18 13 Q12 16 6 13 Z" fill="url(#pale)" stroke="#777" />
            <ellipse cx="12" cy="16" rx="9" ry="4" fill="#111" />
            <path d="M4 18 Q12 25 20 18" fill="none" stroke="#555" strokeWidth="2" />
          </Plain>
        </button>
        <button type="button" aria-label="Wire preview" className="grid h-7 w-[29px] place-items-center">
          <Plain>
            <path d="M2 12 L12 2 Q21 1 23 9 L13 21 Q3 23 2 12 Z" fill="#fff" stroke="#333" strokeWidth="1.4" />
            <ellipse cx="17" cy="7" rx="4.5" ry="3" fill="#fff" stroke="#333" transform="rotate(40 17 7)" />
            <ellipse cx="8" cy="16" rx="5.5" ry="4" fill="none" stroke="#333" transform="rotate(45 8 16)" />
          </Plain>
        </button>
        <button type="button" aria-label="Shaded preview" className="grid size-7 place-items-center border border-[#2a6ebb] bg-[#eaf3fc]">
          <Plain>
            <path d="M1 12 L10 2 Q20 0 23 8 L15 21 Q6 24 1 12 Z" fill="url(#red)" stroke="#600" />
            <path d="M10 8 Q14 11 15 20" fill="none" stroke="#700" />
          </Plain>
        </button>
        <span className="mx-2 h-6 w-px bg-[#c8c8c8]" />
        <button type="button" aria-label="Selected only" className="grid h-7 w-7 place-items-center">
          <Plain>
            <path d="M2 12 L10 3 Q19 0 23 9 L15 21 Q5 23 2 12 Z" fill="#d4d8d4" stroke="#666" />
            <path d="M8 5 Q19 -1 23 9 L19 18 Z" fill="#5aa02c" />
            <path d="M2 3 L22 22" stroke="#111" strokeWidth="1.6" />
          </Plain>
        </button>
        <button type="button" aria-label="Preview settings" className="grid h-7 w-[26px] place-items-center">
          <Plain>
            <circle cx="12" cy="12" r="10" fill="#e8e8f0" stroke="#666" />
            <path d="M12 2 A10 10 0 0 0 12 22 Z" fill="#f09a30" />
            <path d="M12 2 V22" stroke="#d03018" strokeWidth="1.5" />
          </Plain>
        </button>
      </div>
    </div>
  );
}

type Box = [number, number, number, number];

function Nodes({ boxes, fill }: { boxes: Box[]; fill: string }) {
  return (
    <g fill={fill} stroke="#2c2c30" strokeWidth="3.5">
      {boxes.map(([x, y, w, h]) => (
        <rect key={`${x}-${y}`} x={x} y={y} width={w} height={h} rx="4" />
      ))}
    </g>
  );
}

function Groups({ boxes, rx }: { boxes: Box[]; rx: number }) {
  return (
    <g fill="#b8a6e8" stroke="#a898cc" strokeWidth="3">
      {boxes.map(([x, y, w, h]) => (
        <rect key={`${x}-${y}`} x={x} y={y} width={w} height={h} rx={rx} />
      ))}
    </g>
  );
}

const glyphs: Record<string, string> = {
  left: "M8 0 H-8 M-2 -6 L-8 0 L-2 6",
  right: "M-8 0 H8 M2 -6 L8 0 L2 6",
  up: "M0 8 V-8 M-6 -2 L0 -8 L6 -2",
  down: "M0 -8 V8 M-6 2 L0 8 L6 2",
  v: "M0 -9 V9 M-4 0 H4",
  h: "M-9 0 H9",
  rows: "M-10 -7 H10 M-10 0 H10 M-10 7 H10",
  cols: "M-7 -10 V10 M0 -10 V10 M7 -10 V10",
};

const grips: [number, number, string][] = [
  [1151, 160, "rows"], [1114, 196, "left"], [1151, 196, "v"], [1187, 196, "right"],
  [1033, 463, "cols"], [1070, 427, "up"], [1070, 463, "h"], [1070, 500, "down"],
  [1235, 427, "up"], [1235, 463, "h"], [1235, 500, "down"], [1271, 463, "cols"],
  [1114, 733, "left"], [1151, 733, "v"], [1187, 733, "right"], [1151, 769, "rows"],
];

function Definition() {
  return (
    <svg viewBox="1047 221 873 784" preserveAspectRatio="xMinYMin slice" className="absolute inset-0 h-full w-full" role="img" aria-label="Definition canvas">
      <path d="M1047 391 H1157 L1175 388 L1210 381 H1367 L1376 377 H1920" fill="none" stroke="#3a3a3a" strokeWidth="1.2" />
      <path d="M1887 221 V235" stroke="#333" strokeWidth="1.4" />
      <path d="M1916 951 L1922 956 M1921 962 Q1911 972 1918 986" fill="none" stroke="#111" strokeWidth="3" />

      <svg x="1040" y="470" width="440" height="280" viewBox="0 0 1320 840" className="overflow-visible">
        <Groups boxes={[[265, 54, 138, 104], [250, 315, 162, 104]]} rx={24} />
        <Groups boxes={[[432, 74, 394, 144]]} rx={2} />
        <g fill="none" stroke="#5c5856" strokeWidth="3">
          <path d="M366 106 H446 M534 106 C600 106 660 115 722 115 M556 180 C580 180 585 166 610 166 M702 180 C720 172 704 140 722 138" />
          <path d="M150 481 C300 481 300 366 374 366 C400 280 460 210 540 194 Q570 190 610 188" />
          <path d="M374 366 C500 366 510 452 634 452 M150 481 C270 481 250 580 372 580 M326 603 H372" />
          <path d="M470 518 C485 518 482 545 496 545 M466 594 C480 594 480 570 496 570 M590 553 C630 553 600 478 634 478 M752 454 C800 454 830 458 886 458" />
        </g>
        <g fill="none" stroke="#a9c48c" strokeWidth="2">
          <path d="M980 468 C1070 468 1020 250 1108 248 M980 468 C1070 468 1030 355 1108 355 M980 468 C1070 468 1030 528 1108 528 M980 468 C1070 468 1030 632 1108 632" />
          <path d="M1044 270 H1108 M1044 376 H1108 M1044 550 H1108 M1044 658 H1108" stroke="#b0b49c" />
          <path d="M1200 270 C1280 270 1200 403 1286 403 M1200 378 C1250 378 1250 403 1286 403 M1200 550 C1260 550 1220 410 1286 403 M1200 658 C1310 670 1270 500 1240 480" />
          <rect x="1070" y="196" width="166" height="537" stroke="#8e948a" strokeDasharray="4 6" />
          <rect x="1064" y="192" width="178" height="545" stroke="#b4b8ae" strokeDasharray="2 6" />
        </g>
        <g stroke="#4c4c14" strokeWidth="4">
          <rect x="18" y="446" width="132" height="70" rx="4" fill="#fbf63c" />
          <rect x="20" y="448" width="128" height="32" fill="#cfc828" stroke="none" />
          <rect x="220" y="586" width="106" height="34" rx="4" fill="#fbf63c" />
        </g>
        <Nodes fill="#e6e0e0" boxes={[[304, 91, 61, 31], [446, 89, 88, 34]]} />
        <Nodes fill="#d9d5d6" boxes={[[722, 98, 93, 55], [610, 151, 93, 55]]} />
        <Nodes fill="url(#plum)" boxes={[[286, 351, 89, 32], [379, 501, 91, 35], [372, 565, 94, 57], [496, 527, 94, 55], [634, 437, 117, 55], [886, 441, 94, 55]]} />
        <Nodes fill="#858289" boxes={[[466, 161, 90, 35]]} />
        {[270, 375, 549, 657].map((y) => (
          <g key={y} stroke="#33333a" strokeWidth="3">
            <rect x="825" y={y - 12} width="219" height="25" fill="#dcdad8" />
            <rect x="825" y={y - 12} width="69" height="25" fill="#8b8894" />
            <rect x="895" y={y - 9} width="14" height="19" fill="#d6d2ee" stroke="none" />
          </g>
        ))}
        {[232, 336, 511, 619].map((y) => (
          <rect key={y} x="1108" y={y} width="92" height="80" rx="2" fill="#82de28" stroke="#256010" strokeWidth="4" />
        ))}
        {grips.map(([x, y, kind]) => (
          <g key={`${x}-${y}`} transform={`translate(${x} ${y})`}>
            <rect x="-16" y="-16" width="32" height="32" rx="3" fill="#262626" stroke="#000" strokeWidth="3" />
            <path d={glyphs[kind]} fill="none" stroke="#f4f4f4" strokeWidth="3.5" />
          </g>
        ))}
      </svg>

      <svg x="1460" y="500" width="460" height="200" viewBox="0 0 1380 600" className="overflow-visible">
        <Groups boxes={[[445, 132, 136, 104]]} rx={20} />
        <Groups boxes={[[946, 396, 394, 142]]} rx={2} />
        <g fill="none" stroke="#5c5856" strokeWidth="3">
          <path d="M124 325 C144 325 140 342 160 342 M255 353 C400 353 480 326 638 326 M602 357 C620 357 620 351 638 351" />
          <path d="M544 183 C600 183 610 163 676 163 M732 362 C830 350 700 260 652 214 C636 196 654 187 676 187" />
          <path d="M790 187 C960 187 800 424 958 424 M1048 425 C1120 425 1160 433 1236 433 M1070 497 C1100 497 1096 484 1122 484 M1217 496 C1236 490 1216 460 1236 457" />
        </g>
        <Nodes fill="#d8d8d4" boxes={[[25, 298, 99, 55], [161, 325, 94, 57], [676, 147, 114, 79], [1237, 418, 92, 54]]} />
        <Nodes fill="#e0dcde" boxes={[[481, 168, 62, 31], [515, 340, 87, 34], [958, 409, 90, 33], [1123, 469, 94, 55]]} />
        <Nodes fill="#8f8a9e" boxes={[[638, 310, 93, 105]]} />
        <Nodes fill="#85818c" boxes={[[979, 481, 91, 34]]} />
      </svg>
    </svg>
  );
}

function CanvasWidgets() {
  return (
    <div className="absolute bottom-0 left-px flex h-[29px] items-center border-2 border-[#222] bg-linear-to-b from-[#e4e4e4] to-[#8f8f8f] pr-[2px]">
      <button type="button" aria-label="Graph mapper" className="grid h-[25px] w-[25px] place-items-center">
        <Tile fill="url(#gold)">{scribble}</Tile>
      </button>
      <button type="button" className="ml-[5px] h-[18px] w-[18px] rounded-[2px] border border-[#666] bg-white text-[14px] leading-none font-bold">×</button>
      <button type="button" className="ml-[10px] h-[18px] w-[18px] rounded-[2px] border border-[#888] bg-white font-['Liberation_Serif',serif] text-[13px] leading-none font-bold italic">-x</button>
      <button type="button" aria-label="Point parameter" className="ml-[7px]">
        <Hex><path d="M8.5 8.5 L15.5 15.5 M15.5 8.5 L8.5 15.5" strokeWidth="3" /></Hex>
      </button>
      <button type="button" className="ml-[5px] font-['Liberation_Serif',serif] text-[19px] leading-none font-bold italic">m²</button>
      <span className="ml-[4px] h-5 w-[3px] bg-[#777]" />
    </div>
  );
}

function GrasshopperWindow() {
  return (
    <section className="relative mt-[10px] flex min-w-0 flex-col border-t border-l-2 border-t-[#5d6f7c] border-l-[#4c7280] bg-[#f0f0f0] shadow-[-2px_0_2px_#5c7c8880]">
      <header className="flex h-11 shrink-0 items-center bg-white pl-[9px]">
        <h2 className="flex-1 font-['Open_Sans',sans-serif] text-[17px] text-[#1a1a1a]">Grasshopper - joints2*</h2>
        <button type="button" aria-label="Minimize" className="mr-[54px] h-px w-[15px] bg-black" />
        <button type="button" aria-label="Maximize" className="mr-[51px] size-[15px] border border-black" />
      </header>
      <nav aria-label="Grasshopper menu" className="flex h-6 shrink-0 items-center gap-[17px] bg-[#f3f3f3] pl-[12px] text-[11px] text-[#111]">
        {ghMenus.map((item) => (
          <button key={item} type="button">
            {item}
          </button>
        ))}
      </nav>
      <div className="flex h-[23px] shrink-0 items-center gap-[21px] overflow-hidden border-b border-[#999] text-[16px] text-[#7c7c7c]">
        <button type="button" className="-mr-3 h-full rounded-t-md border-t border-r border-[#999] bg-white px-[9px] leading-[20px] text-[#1c1c1c]">
          Params
        </button>
        {ghTabs.map((tab) => (
          <button key={tab} type="button" className="pt-[2px] leading-[20px]">
            {tab}
          </button>
        ))}
      </div>
      <div className="flex h-[87px] shrink-0 gap-[4px] bg-linear-to-b from-[#d8d8d8] to-[#f2f2f2] pt-[3px] pl-px">
        {ribbon.map((panel) => (
          <Panel key={panel.title} {...panel} />
        ))}
      </div>
      <CanvasToolbar />
      <div className="relative min-h-0 flex-1 overflow-hidden bg-[#d6cfc9]">
        <Definition />
        <CanvasWidgets />
      </div>
      <footer className="flex h-[15px] shrink-0 items-start gap-1 overflow-hidden bg-[#f8f8f8] pl-[2px] font-['Open_Sans',sans-serif] text-[10px] leading-none text-[#333]">
        <span className="mt-1 grid size-[14px] shrink-0 place-items-center rounded-full bg-[#1f6cb4] text-[9px] text-white">0</span>
        <p className="mt-[7px] flex-1">Autosave complete (190 seconds ago)</p>
        <span className="mt-[7px] w-[14px] overflow-hidden text-[#888]">0.9.0</span>
      </footer>
    </section>
  );
}

export default function App() {
  return (
    <div className="relative grid h-screen grid-cols-[1045fr_875fr] grid-rows-[100%] overflow-hidden border-b border-[#15181c] bg-linear-to-b from-[#f2f7fc] to-[#cddbe6] to-[10px] font-['Liberation_Sans',Arial,sans-serif]">
      <Gradients />
      <RhinoWindow />
      <GrasshopperWindow />
    </div>
  );
}
